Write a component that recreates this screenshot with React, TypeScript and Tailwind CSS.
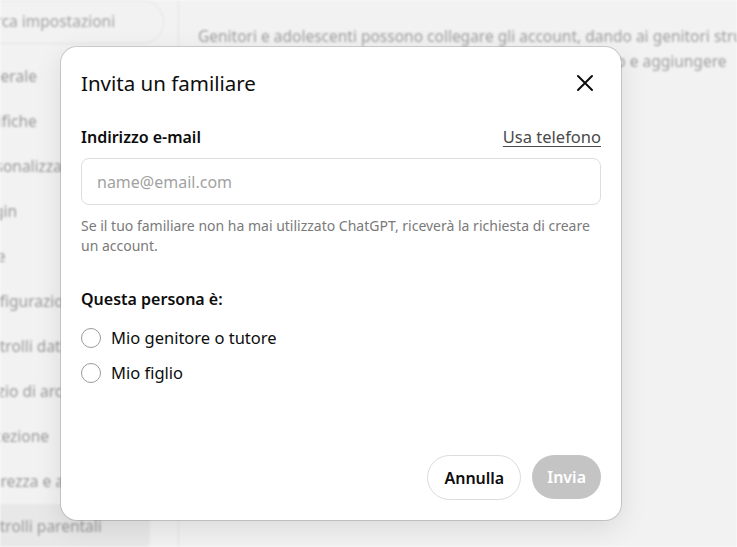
const sidebarItems = [
  'Generale',
  'Notifiche',
  'Personalizzazione',
  'Plugin',
  'Voce',
  'Configurazione',
  'Controlli dati',
  'Spazio di archiviazione',
  'Protezione',
  'Sicurezza e accesso',
  'Controlli parentali',
];

function SettingsBackdrop() {
  return (
    <div className="flex h-full w-full bg-[#f2f2f2] blur-[1.2px]">
      <div className="w-[179px] shrink-0 overflow-hidden border-r border-[#e2e2e2]">
        <div className="-ml-[30px] flex flex-col pr-[14px]">
          <div className="flex h-[44px] items-center rounded-full border border-[#e4e4e4] pl-[6px] text-[15.5px] text-[#a3a3a3]">
            Cerca impostazioni
          </div>
          <div className="mt-[10px] flex flex-col">
            {sidebarItems.map((item) => (
              <div
                key={item}
                className={`flex h-[45px] items-center whitespace-nowrap pl-[1px] text-[15.5px] text-[#9a9a9a] ${
                  item === 'Controlli parentali' ? 'mr-[14px] rounded-lg bg-[#e8e8e8]' : ''
                }`}
              >
                {item}
              </div>
            ))}
          </div>
        </div>
      </div>
      <div className="flex-1 overflow-hidden pl-[19px] pt-[24px]">
        <div className="whitespace-nowrap text-[15.5px] leading-[25px] text-[#a0a0a0]">
          <div>Genitori e adolescenti possono collegare gli account, dando ai genitori strumenti</div>
          <div>per gestire le funzionalità, impostare alcuni limiti di utilizzo e aggiungere</div>
          <div>protezioni pensate per gli adolescenti.</div>
        </div>
      </div>
    </div>
  );
}

function Radio({ label }: { label: string }) {
  return (
    <label className="flex h-[24px] items-center gap-[10px]">
      <span className="h-[20px] w-[20px] rounded-full border border-[#9a9a9a] bg-white" />
      <span className="text-[16.5px] text-[#0d0d0d]">{label}</span>
    </label>
  );
}

export default function App() {
  return (
    <div
      className="relative h-[547px] w-[737px] overflow-hidden"
      style={{ fontFamily: '"Noto Sans", "Open Sans", sans-serif' }}
    >
      <SettingsBackdrop />

      <div className="absolute left-[61px] top-[47px] flex h-[473px] w-[560px] flex-col rounded-2xl bg-white px-5 pb-5 pt-5 shadow-[0_8px_28px_rgba(0,0,0,0.10)] ring-1 ring-black/15">
        <div className="flex h-[32px] items-center justify-between">
          <h2 className="text-[20.5px] font-normal text-[#0d0d0d]">Invita un familiare</h2>
          <button className="flex h-8 w-8 items-center justify-center text-[#0d0d0d]">
            <svg width="18" height="18" viewBox="0 0 18 18" fill="none" stroke="currentColor" strokeWidth="2" strokeLinecap="round">
              <path d="M2 2l14 14M16 2L2 16" />
            </svg>
          </button>
        </div>

        <div className="mt-[26px] flex h-[24px] items-center justify-between">
          <span className="text-[16px] font-semibold text-[#0d0d0d]">Indirizzo e-mail</span>
          <a className="text-[16.5px] text-[#4a4a4a] underline underline-offset-[3px]">Usa telefono</a>
        </div>

        <input
          type="text"
          placeholder="name@email.com"
          className="mt-[9px] h-[47px] w-full rounded-lg border border-[#dedede] px-[15px] text-[16px] text-[#0d0d0d] placeholder-[#a2a2a2] outline-none"
        />

        <p className="mt-[11px] text-[14px] leading-[20px] text-[#7a7a7a]">
          Se il tuo familiare non ha mai utilizzato ChatGPT, riceverà la richiesta di creare un account.
        </p>

        <div className="mt-[31px] h-[24px] text-[16px] font-semibold leading-[24px] text-[#0d0d0d]">
          Questa persona è:
        </div>

        <div className="mt-[15px] flex flex-col gap-[11px]">
          <Radio label="Mio genitore o tutore" />
          <Radio label="Mio figlio" />
        </div>

        <div className="mt-auto flex justify-end gap-[11px]">
          <button className="h-[45px] rounded-full border border-[#dcdcdc] bg-white px-[16px] text-[16px] font-semibold text-[#0d0d0d]">
            Annulla
          </button>
          <button className="h-[44px] rounded-full bg-[#c4c4c4] px-[15px] text-[16px] font-semibold text-white">
            Invia
          </button>
        </div>
      </div>
    </div>
  );
}
